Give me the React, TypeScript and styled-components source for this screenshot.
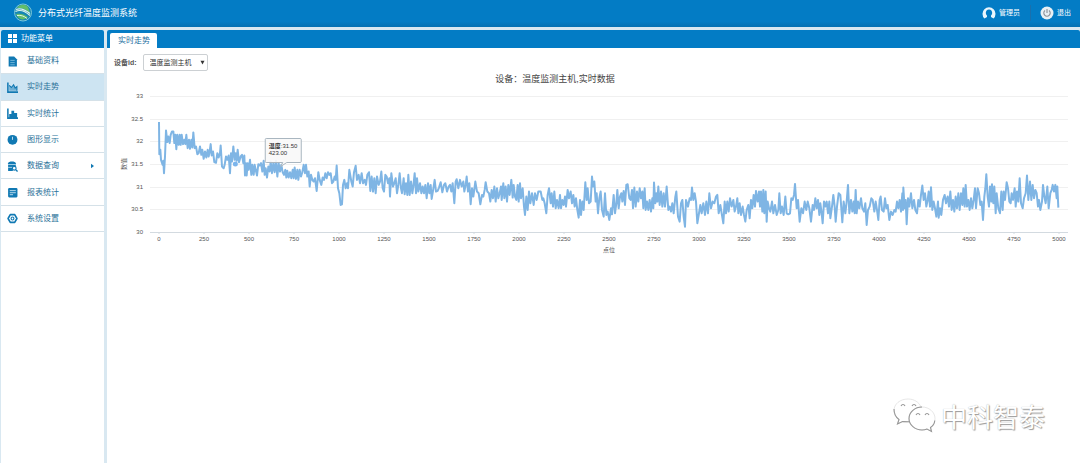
import React from "react";
import styled, { createGlobalStyle } from "styled-components";

const GlobalStyle = createGlobalStyle`
  *, *::before, *::after { box-sizing: border-box; }
  html, body, #root { height: 100%; }
  body {
    margin: 0;
    background: #d9e8f1;
    color: #444;
    font-family: "Liberation Sans", "Noto Sans CJK SC", sans-serif;
    font-size: 8px;
    line-height: 12px;
  }
`;

const Page = styled.div`
  min-height: 100%;
  display: flex;
  flex-direction: column;
  position: relative;
`;

const Header = styled.header`
  height: 27px;
  flex: none;
  display: flex;
  align-items: center;
  padding: 0 9px 2px 13px;
  background: linear-gradient(#037cc5 0 80%, #0470b2);
  color: #fff;
`;

const Title = styled.h1`
  margin: 0 auto 0 5px;
  font-size: 9px;
  font-weight: 400;
  line-height: 14px;
`;

const HeaderButton = styled.button<{ $divided?: boolean }>`
  display: flex;
  align-items: center;
  gap: 3px;
  height: 16px;
  padding: 0 0 0 ${(p) => (p.$divided ? "9px" : "0")};
  margin-left: ${(p) => (p.$divided ? "10px" : "0")};
  border: 0;
  border-left: ${(p) => (p.$divided ? "1px solid #1a70ad" : "0")};
  background: none;
  color: #fff;
  font: inherit;
  font-size: 7px;
`;

const Body = styled.div`
  flex: 1;
  display: grid;
  grid-template-columns: 103px minmax(0, 1fr);
  gap: 3px;
  padding: 3px 0 0 1px;
`;

const Sidebar = styled.nav`
  display: flex;
  flex-direction: column;
  background: #fff;
  border-radius: 2px 2px 0 0;
  overflow: hidden;
`;

const SidebarTitle = styled.h2`
  display: flex;
  align-items: center;
  gap: 4px;
  height: 18px;
  margin: 0;
  padding: 0 0 1px 7px;
  background: #037cc5;
  color: #fff;
  font-size: 8px;
  font-weight: 400;
`;

const Menu = styled.ul`
  display: flex;
  flex-direction: column;
  height: 184px;
  margin: 0;
  padding: 0;
  list-style: none;
`;

const MenuItem = styled.li<{ $active?: boolean }>`
  flex: 1;
  display: flex;
  border-bottom: 1px solid #d5e1e8;
  background: ${(p) => (p.$active ? "#cde4f2" : "#fff")};
`;

const MenuLink = styled.a`
  flex: 1;
  display: grid;
  grid-template-columns: 11px 1fr 5px;
  column-gap: 9px;
  align-items: center;
  padding: 1px 9px 0 6px;
  color: #2a7199;
  text-decoration: none;
`;

const Panel = styled.main`
  display: flex;
  flex-direction: column;
  background: #fff;
  border-radius: 2px 2px 0 0;
  overflow: hidden;
`;

const TabBar = styled.div`
  display: flex;
  align-items: flex-end;
  height: 18px;
  padding-left: 3px;
  background: #037cc5;
`;

const Tab = styled.button`
  height: 15px;
  padding: 1px 7px 0 8px;
  border: 0;
  border-radius: 2px 2px 0 0;
  background: #fff;
  color: #1d6f9f;
  font: inherit;
`;

const Filter = styled.div`
  display: flex;
  align-items: center;
  gap: 6px;
  padding: 6px 7px 0;
  font-size: 7px;
`;

const FilterLabel = styled.label`
  font-weight: 700;
  color: #555;
`;

const SelectBox = styled.span`
  position: relative;
  display: flex;
  svg { position: absolute; right: 3px; top: 6px; pointer-events: none; }
`;

const Select = styled.select`
  appearance: none;
  width: 65px;
  height: 17px;
  padding: 0 12px 0 6px;
  border: 1px solid #ccd0d3;
  border-radius: 2px;
  background: #fff;
  color: #333;
  font: inherit;
`;

const Figure = styled.figure`
  margin: 0;
  padding: 0 12px 0 43px;
`;

const Caption = styled.figcaption`
  margin-bottom: 11px;
  padding: 2px 108px 0 0;
  text-align: center;
  font-size: 9px;
  color: #444;
`;

const Chart = styled.svg`
  display: block;
  width: 100%;
  height: 162px;
  overflow: visible;
  font-size: 6px;
  fill: #555;
`;

const Watermark = styled.div`
  position: absolute;
  right: 35px;
  bottom: 28px;
  display: flex;
  align-items: center;
  gap: 5px;
  color: #fff;
  font-family: "Noto Sans CJK SC", sans-serif;
  font-size: 26px;
  line-height: 38px;
  text-shadow: 1px 1px 1px #999, 0 0 1px #aaa;
`;

const BLUE = "#1179b3";

const menu = [
  {
    label: "基础资料",
    icon: <><path d="M1.500.5h5l2.500 2.500v6.500h-7.500z" fill={BLUE} /><path d="M3 4h4M3 6h4M3 8h4" stroke="#8cc4e2" strokeWidth=".7" /></>,
  },
  {
    label: "实时走势",
    active: true,
    icon: <><path d="M.8.5v8.700H10" fill="none" stroke={BLUE} strokeWidth="1.400" /><path d="M2 8V3l2 2 2-2.500 1.400 3L9 4v4z" fill={BLUE} opacity=".5" /><path d="M2 3l2 2 2-2.500 1.400 3L9 4.200V8" fill="none" stroke={BLUE} /></>,
  },
  {
    label: "实时统计",
    icon: <><path d="M.8.5v8.700H10" fill="none" stroke={BLUE} strokeWidth="1.400" /><path d="M2 5.500h2V9H2zM4 2.500h2.500V9H4zM6.500 4.500h2.700V9H6.500z" fill={BLUE} /></>,
  },
  {
    label: "图形显示",
    icon: <><circle cx="5" cy="5.300" r="4.500" fill={BLUE} /><path d="M5 5.300V2.500" stroke="#cfe7f4" strokeWidth=".8" /></>,
  },
  {
    label: "数据查询",
    submenu: true,
    icon: <><path d="M1 2c0-2 7-2 7 0v3.500L5 9H1z" fill={BLUE} /><path d="M1 3.200h7M1 5.800h4" stroke="#cfe7f4" strokeWidth=".7" /><circle cx="6.600" cy="6.600" r="1.700" fill="#fff" stroke={BLUE} /><path d="M8 8l1.600 1.600" stroke={BLUE} strokeWidth="1.200" /></>,
  },
  {
    label: "报表统计",
    icon: <><rect x="1" y="1" width="8.500" height="8.500" rx="1" fill={BLUE} /><path d="M2.500 3.300h5.500M2.500 5.200h5.500M2.500 7h3" stroke="#cfe7f4" strokeWidth=".8" /></>,
  },
  {
    label: "系统设置",
    icon: <><path d="M3 1.500h4L9 5 7 8.500H3L1 5z" fill="none" stroke={BLUE} strokeWidth="1.500" strokeLinejoin="round" /><circle cx="5" cy="5" r="1.300" fill="none" stroke={BLUE} /></>,
  },
];

/* Sampled trace, stored in blocks of x,y pairs relative to each block's start. */
const trace = [
  {
    start: -120,
    points:
      "147,112 148,208 151,195 153,225 158,240 160,228 162,265 165,215 168,137 172,172 175,155 179,175 182,150 186,140 190,140 193,175 196,150 199,193 202,150 206,180 209,150 212,180 215,150 219,178 223,165 226,178 229,150 233,190 237,165 240,192 244,165 247,188 250,143 254,190 258,185 262,208 266,205 270,185 274,210 277,195 281,222 285,200 289,218 293,195 296,215 299,200 302,178 305,212 309,200 313,232 318,234 322,205 326,218 330,205 332,182 336,245 341,250 344,240 348,215 352,225 356,212 360,265 363,205 366,230 370,185 374,225 377,205 380,228 383,195 387,232 392,215 396,210 400,235 403,212 405,272 408,235 410,272 413,235 416,255 420,225 424,270 427,240 431,270 434,240 437,255 441,272 445,238 449,242 453,235 457,260 461,228 464,270 467,250 471,278 475,245 479,260 482,230 486,265 490,235 494,262 498,228 502,275 506,235 510,260 514,240 518,262 522,270 526,255 529,278 532,258 536,278 540,262 544,280 548,255 551,280 554,248 558,282 562,255 565,285 569,255 573,275 577,262 581,240 585,265 588,240 592,275 596,260 599,305 603,270 607,285 611,290 615,280 620,318 625,262 629,285 634,300 638,278 642,285 646,265 650,280 654,262 658,270 662,265 666,295 670,290 674,275 677,285 680,242 684,310 688,325 692,360 696,358 699,300 703,285 707,310 711,295 714,310 718,255",
  },
  {
    start: 600,
    points:
      "4,290 8,305 12,262 17,243 21,285 26,270 30,295 35,265 39,295 44,285 48,300 52,270 57,262 61,318 65,275 69,320 73,280 77,325 81,275 86,300 90,290 94,260 98,310 102,320 106,270 110,275 114,295 118,280 120,335 124,265 129,305 133,295 137,280 141,325 145,300 149,265 153,310 156,325 161,280 164,328 168,295 172,330 175,270 179,330 183,290 187,325 190,305 194,265 198,325 201,280 205,320 210,295 214,325 218,305 222,325 226,300 230,340 234,295 238,325 242,300 245,342 249,318 254,285 258,320 263,318 267,308 272,292 277,322 282,300 286,295 291,320 296,305 300,300 304,320 308,295 313,355 317,290 320,283 325,310 330,285 335,305 340,290 343,320 347,300 350,275 354,320 358,295 362,358 366,310 370,335 376,290 381,320 386,325 391,358 396,330 400,335 404,315 407,292 412,320 417,325 421,350 425,315 429,340 433,305 437,350 441,310 445,340 449,325 453,305 455,345 460,295 463,340 467,305 471,350 475,300 479,330 484,285 488,338 491,300 495,335 499,345 503,300 506,350 510,295 513,340 518,310 522,365 525,390 529,335 533,375 537,320 541,355 546,325 551,360 555,325 560,345 565,320 572,320 577,345 580,340 584,355 589,385 593,330 597,310 602,355 605,325 609,365 613,320 617,370 621,345 626,370 630,330 633,370 637,345 641,360 645,335 648,365 653,315 657,340 662,320 666,355 670,330 674,365 678,340 682,375 686,398 690,345 693,390 697,350 701,375 706,292 710,345 713,310 717,355",
  },
  {
    start: 1320,
    points:
      "2,350 6,275 9,305 13,290 17,350 20,325 24,385 28,340 32,320 36,375 41,395 45,325 49,390 53,380 58,405 63,370 66,388 71,330 75,385 79,355 82,315 86,370 90,335 94,325 97,350 101,318 105,360 109,300 113,298 118,340 122,345 126,315 129,370 133,308 137,365 141,320 145,350 149,310 153,340 157,320 160,370 164,310 167,375 171,350 175,375 179,345 183,380 187,340 190,370 192,293 196,355 199,325 202,350 205,305 209,360 213,320 217,365 221,325 225,365 230,305 235,375 239,365 243,380 247,355 251,385 256,335 259,320 264,395 269,410 273,355 277,345 281,395 285,425 288,345 294,365 299,340 303,345 306,308 310,345 314,325 318,350 322,415 327,385 331,360 335,385 340,355 345,390 349,350 354,385 358,325 363,370 368,350 373,355 378,335 382,330 386,385 391,360 395,385 400,415 404,350 408,385 412,350 416,380 420,340 425,365 430,345 434,380 438,365 442,340 445,385 449,355 453,390 458,365 462,390 466,410 470,375 475,360 479,400 483,345 487,370 491,330 495,365 498,318 503,350 507,320 510,365 513,320 517,380 520,315 523,385 527,320 530,410 533,350 537,370 541,380 546,350 550,385 555,360 560,390 565,375 568,325 572,385 576,365 581,390 586,335 590,385 595,388 600,385 604,340 608,345 612,330 615,297 620,370 624,345 629,410 634,370 639,385 644,350 649,375 653,350 658,370 663,410 668,360 672,375 676,340 680,370 684,345 688,390 691,355 695,385 698,415 702,350 706,365 710,350 714,385 718,350",
  },
  {
    start: 2040,
    points:
      "1,400 6,365 10,330 14,365 17,410 21,365 26,325 31,330 37,412 41,350 46,385 50,350 54,300 58,385 63,345 67,380 71,350 74,385 77,315 80,385 84,350 88,370 93,340 97,370 102,380 106,355 110,420 114,375 119,365 124,340 128,345 133,380 137,350 141,375 145,405 149,345 152,335 156,375 161,380 165,340 169,370 173,360 178,405 183,380 188,390 193,375 197,380 201,350 205,370 209,345 213,380 217,325 219,375 220,308 224,370 227,345 230,418 234,340 238,365 243,325 247,370 252,345 256,375 261,385 265,345 269,365 273,330 277,302 281,345 285,325 289,365 293,345 296,320 300,365 303,307 307,375 311,350 315,370 319,395 324,350 326,398 330,370 334,390 339,345 344,330 348,355 353,335 357,365 361,320 365,375 369,345 373,380 377,335 381,370 385,325 389,375 393,325 397,360 400,310 404,365 407,300 411,365 415,345 419,375 423,340 427,370 431,345 435,310 438,370 443,310 447,325 451,360 455,350 459,405 463,335 466,310 469,268 473,335 477,365 480,305 484,350 486,298 490,355 493,305 497,385 500,325 505,370 510,385 514,320 518,375 521,320 525,345 530,292 534,310 538,350 542,355 545,325 549,345 554,310 557,365 561,320 565,350 569,280 573,355 578,370 582,340 587,325 591,272 595,345 600,290 604,345 608,300 612,340 616,315 620,325 624,365 627,345 631,375 636,350 639,300 643,335 647,355 652,305 656,370 661,325 665,315 668,300 672,320 676,300 680,340 682,305 685,368",
  },
];

const polyline = trace
  .flatMap(({ start, points }) =>
    points.split(" ").map((pair) => {
      const [x, y] = pair.split(",").map(Number);
      return `${x + start},${y}`;
    }),
  )
  .join(" ");

const yTicks = ["33", "32.5", "32", "31.5", "31", "30.5", "30"];
const yPositions = [0, 23, 45, 68, 91, 113, 136];
const xTicks = Array.from({ length: 21 }, (_, i) => i * 250);
const xPosition = (value: number) => `${((9 + (value / 5000) * 900) / 918) * 100}%`;

function TrendChart() {
  return (
    <Chart role="img" aria-label="温度实时数据">
      {yTicks.map((tick, i) => (
        <g key={tick}>
          <line
            x1="0"
            x2="100%"
            y1={yPositions[i] + 0.5}
            y2={yPositions[i] + 0.5}
            stroke={i === 6 ? "#d3dae0" : "#f0f0f0"}
          />
          <text x="-7" y={yPositions[i] + 2} textAnchor="end">{tick}</text>
        </g>
      ))}
      {xTicks.map((tick) => (
        <g key={tick}>
          <line x1={xPosition(tick)} x2={xPosition(tick)} y1="136" y2="138" stroke="#d3dae0" />
          <text x={xPosition(tick)} y="145" textAnchor="middle">{tick}</text>
        </g>
      ))}
      <text x="50%" y="156" textAnchor="middle">点位</text>
      <text transform="translate(-24 68) rotate(-90)" textAnchor="middle">数值</text>
      <svg width="100%" height="136" viewBox="0 34 2754 407" preserveAspectRatio="none">
        <polyline
          points={polyline}
          fill="none"
          stroke="#7fb5e4"
          strokeWidth="2"
          strokeLinejoin="round"
          vectorEffect="non-scaling-stroke"
        />
      </svg>
      <circle cx="9.3%" cy="68" r="2.500" fill="#7cb5ec" />
      <svg x="12.5%" y="42" width="40" height="32" overflow="visible">
        <path
          d="M1.500.5h34a1 1 0 0 1 1 1v22a1 1 0 0 1-1 1H22l-6 4 2-4H1.500a1 1 0 0 1-1-1v-22a1 1 0 0 1 1-1z"
          fill="#f8f8f8"
          fillOpacity=".9"
          stroke="#a9b6c0"
        />
        <text x="4" y="10" fill="#333"><tspan fontWeight="700">温度</tspan>:31.50</text>
        <text x="4" y="17" fill="#333">423.00</text>
      </svg>
    </Chart>
  );
}

export default function App() {
  return (
    <Page>
      <GlobalStyle />
      <Header>
        <svg width="20" height="19" viewBox="0 0 20 19" aria-hidden="true">
          <circle cx="10" cy="9.500" r="8.500" fill="#1687b5" stroke="#7cc6d8" strokeWidth="1" />
          <path d="M4 5c3-4 8-4 11-1l2 6C13 6 9 5 4 5z" fill="#62bd6a" />
          <path d="M2.500 8.500c5-2.500 9-1 14.500 4M3 6.500c5-2 9 0 14 4" fill="none" stroke="#dff4ec" strokeWidth="1.100" />
          <path d="M3 11c4-1 8 0 12 3-4 4-10 3-12-3z" fill="#62bd6a" />
          <path d="M4 12.500c4-.5 7 .5 10 3" fill="none" stroke="#dff4ec" />
        </svg>
        <Title>分布式光纤温度监测系统</Title>
        <HeaderButton>
          <svg width="14" height="14" viewBox="0 0 14 14" aria-hidden="true">
            <path d="M2.500 12.500A6.500 6.500 0 1 1 11.500 12.500L9 11V9.500C11 8 10.500 3.500 7 3.500S3 8 5 9.500V11z" fill="#e9f5fc" />
          </svg>
          管理员
        </HeaderButton>
        <HeaderButton $divided>
          <svg width="14" height="14" viewBox="0 0 14 14" aria-hidden="true">
            <circle cx="7" cy="7" r="6.500" fill="#e9f0f4" />
            <path d="M5 4.500a3.200 3.200 0 1 0 4 0M7 3v4" fill="none" stroke="#8b8f96" strokeWidth="1.100" />
          </svg>
          退出
        </HeaderButton>
      </Header>
      <Body>
        <Sidebar>
          <SidebarTitle>
            <svg width="9" height="9" viewBox="0 0 9 9" aria-hidden="true">
              <path d="M0 0h4v4H0zM5 0h4v4H5zM0 5h4v4H0zM5 5h4v4H5z" fill="#fff" />
            </svg>
            功能菜单
          </SidebarTitle>
          <Menu>
            {menu.map((item) => (
              <MenuItem key={item.label} $active={item.active}>
                <MenuLink href="#">
                  <svg width="11" height="11" viewBox="0 0 10 10" aria-hidden="true">{item.icon}</svg>
                  {item.label}
                  {item.submenu && (
                    <svg width="5" height="6" viewBox="0 0 5 6" aria-hidden="true">
                      <path d="M1 .8 4 3 1 5.200z" fill={BLUE} />
                    </svg>
                  )}
                </MenuLink>
              </MenuItem>
            ))}
          </Menu>
        </Sidebar>
        <Panel>
          <TabBar>
            <Tab>实时走势</Tab>
          </TabBar>
          <Filter>
            <FilterLabel htmlFor="device">设备id:</FilterLabel>
            <SelectBox>
              <Select id="device">
                <option>温度监测主机</option>
              </Select>
              <svg width="5" height="5" viewBox="0 0 5 5" aria-hidden="true">
                <path d="M.5.8h4L2.500 4.500z" fill="#333" />
              </svg>
            </SelectBox>
          </Filter>
          <Figure>
            <Caption>设备：温度监测主机,实时数据</Caption>
            <TrendChart />
          </Figure>
        </Panel>
      </Body>
      <Watermark>
        <svg width="43" height="36" viewBox="0 0 43 36" aria-hidden="true">
          <g fill="#fff" stroke="#dcdcdc" strokeWidth=".7">
            <path d="M15 1C7 1 1 6 1 12.500c0 4 2 7 5 9L4.500 26l5-2.500c2 .6 4 .8 7 .5C29 22 30 15 28 9 26 4 21 1 15 1z" />
            <path d="M29 9c-7 0-13 5-13 11.500S22 32 29 32c2 0 3.500-.3 5-1l4.500 2.500-1-4C40.500 27.500 42 24 42 20.500 42 14 36 9 29 9z" />
          </g>
          <g fill="none" stroke="#979797" strokeWidth="1.100">
            <path d="M1 11c0 5 2 8.500 5 10.500L4.500 26l5-2.500 7 .3" />
            <path d="M29 9c-7 0-13 5-13 11.500S22 32 29 32c2 0 3.500-.3 5-1l4.500 2.500-1-4c2.500-1.500 4-4 4.300-7" />
            <path d="M8 8c1-2 3-2 4 0M19 8c1-2 3-2 4 0M23 17c1-2 3-2 4 0M32 17c1-2 3-2 4 0" />
          </g>
        </svg>
        中科智泰
      </Watermark>
    </Page>
  );
}
